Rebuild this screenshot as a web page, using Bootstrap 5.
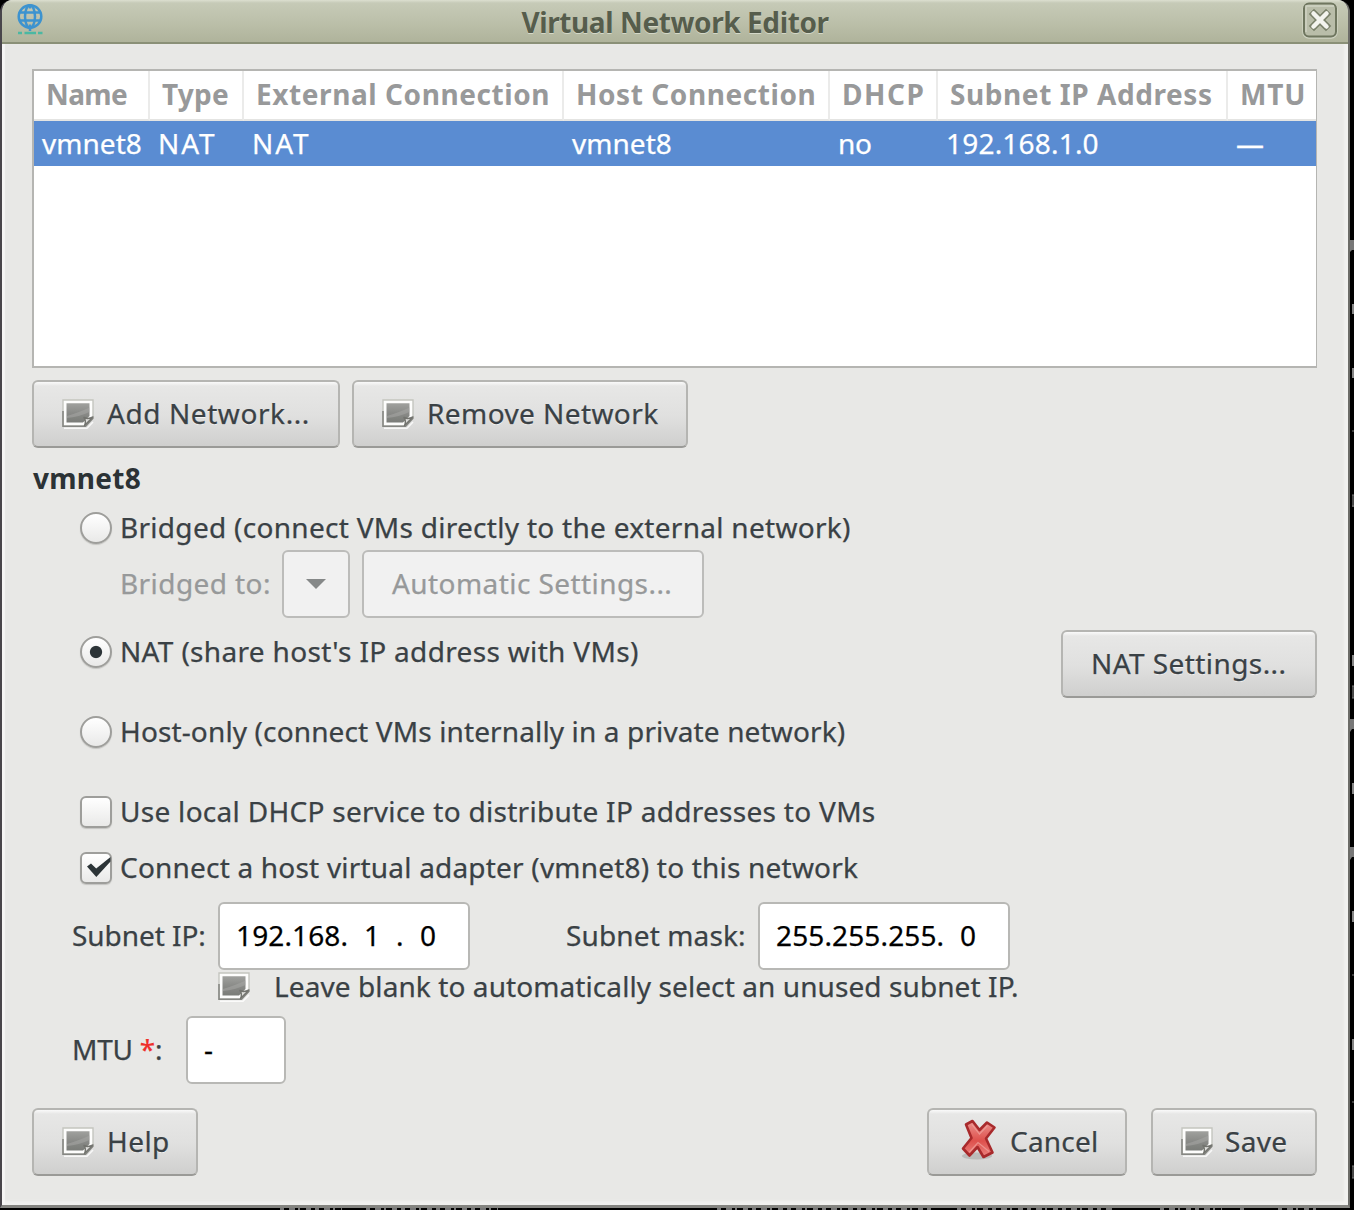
<!DOCTYPE html>
<html lang="en">
<head>
<meta charset="utf-8">
<title>Virtual Network Editor</title>
<link href="https://cdn.jsdelivr.net/npm/bootstrap@5.3.0/dist/css/bootstrap.min.css" rel="stylesheet">
<style>
body{width:1354px;height:1210px;overflow:hidden;background:#000;font-family:"Noto Sans","Open Sans",sans-serif;font-size:28px;line-height:34px;color:#3a4145}
.desk{width:1354px;height:1210px}
.win{width:1350px;height:1208px;background:#e8e8e6;border-style:solid;border-width:0 2px 3px 2px;border-color:#8b8b87 #6c6c68 #858581 #49464b;border-radius:12px 12px 0 0;overflow:hidden}
.titlebar{height:44px;background:linear-gradient(#dcdfd0 0,#c6cab7 3px,#bcc0aa 22px,#b0b49c 41px);border-bottom:2px solid #8a9077;color:#565d4c;font-weight:700;text-shadow:0 1px 0 #d4d8c8}
.titlebar .t{top:1px}
.titlebar .globe{left:14px;top:3px}
.titlebar .shut{right:10px;top:2px}
.main-area{height:1161px;padding:25px 31px 0 30px;box-shadow:inset 3px 0 1px #f6f5f4,inset -4px -4px 2px #f1f1ef}
.t{display:inline-block;white-space:nowrap;position:relative;top:-1px;-webkit-text-stroke:.25px currentColor}
th .t,.titlebar .t,.lead-in .t{-webkit-text-stroke:0}
.list{height:299px;border:2px solid #b5b5b2;border-right-width:1px;background:#fff;width:1285px}
.list table{table-layout:fixed;width:1282px;margin:0;border-collapse:separate;border-spacing:0}
.list th{height:50px;padding:0 0 0 12px;color:#98999a;font-weight:700;border-right:2px solid #ebebea;border-bottom:2px solid #e4e4e2;white-space:nowrap;vertical-align:middle}
.list th:last-child{border-right:0}
.list td{height:45px;padding:0 0 0 8px;background:#5a8cd2;color:#fff;white-space:nowrap;vertical-align:middle}
.btn-gtk{height:68px;padding:0 0 0 28px;display:flex;align-items:center;font-size:28px;line-height:34px;color:#3a4145;border:2px solid #b5b5b2;border-bottom-color:#9a9a97;border-radius:6px;background:linear-gradient(#fafafa 0,#e7e7e6 4px,#e0e0df 34px,#cfcfce 64px);text-shadow:0 1px 0 #f4f4f4}
.btn-gtk .ico{margin-right:13px}
.btn-gtk.off{background:#f1f1f1;color:#97999a;border-color:#bcbcba}
.opt{margin:0;padding:0;height:40px;display:flex;align-items:center;min-height:0}
.form-check.opt .form-check-input{float:none;width:32px;height:32px;margin:0 8px 0 0;border:2px solid #9e9e9b;background:linear-gradient(#fff,#e9e9e8);box-shadow:0 1px 1px #c4c4c1}
.form-check.opt .form-check-input[type=checkbox]{border-radius:6px}
.form-check.opt .form-check-input[type=radio]:checked{background:radial-gradient(circle at 50% 50%,#2c3437 0 5.6px,transparent 6.6px),linear-gradient(#fff,#e9e9e8)}
.tick{left:0;top:4px}
.field{height:68px;border:2px solid #b8b8b5;border-radius:6px;background:#fff;color:#000;padding:0 0 0 16px;display:flex;align-items:center;font-size:28px;line-height:34px}
.w1{width:308px}.w2{width:336px}.w3{width:342px}.w4{width:256px}.w5{width:166px}.w6{width:200px}.w7{width:166px}
.indent{padding-left:48px}
.g0{letter-spacing:.05px}.g1{letter-spacing:.13px}.g2{letter-spacing:.2px}.g3{letter-spacing:.29px}.g35{letter-spacing:.33px}.g4{letter-spacing:.43px}.g5{letter-spacing:.42px}.g6{letter-spacing:.58px}.g17{letter-spacing:.9px}.g19{letter-spacing:1.9px}.g20{letter-spacing:1.5px}.n3{letter-spacing:-.23px}.n4{letter-spacing:-.4px}.n6{letter-spacing:-.6px}
.lead-in{color:#2b3235;font-weight:700;padding-left:1px}
.scraps{right:0;top:0}.scraps-low{left:0;bottom:0}
</style>
<script src="https://cdn.jsdelivr.net/npm/bootstrap@5.3.0/dist/js/bootstrap.bundle.min.js"></script>
</head>
<body>
<svg width="0" height="0" class="position-absolute">
<defs>
<linearGradient id="pg" x1="0" y1="0" x2="0" y2="1"><stop offset="0" stop-color="#a0a19e"/><stop offset=".5" stop-color="#8a8b88"/><stop offset="1" stop-color="#7a7c78"/></linearGradient>
<linearGradient id="xg" x1="0" y1="0" x2="0" y2="1"><stop offset="0" stop-color="#ec9590"/><stop offset=".55" stop-color="#de504c"/><stop offset="1" stop-color="#ec8480"/></linearGradient>
<symbol id="note" viewBox="0 0 32 30">
<path d="M2 29.2H25L31 23" fill="none" stroke="#fff" stroke-width="1.6" opacity=".8"/>
<path d="M1 1H31V19L23.500 27H1Z" fill="#fdfdfc" stroke="#c4c5bf" stroke-width="1.400"/>
<path d="M1 12V27.2H23.500L31.200 19" fill="none" stroke="#868783" stroke-width="1.600"/>
<path d="M4.500 4.200H27.500V17L21 23.500H4.500Z" fill="url(#pg)"/>
<path d="M5 17Q18 13 27.500 8.500V13Q17 18 5 19Z" fill="#a9aaa7" opacity=".5"/>
<path d="M22.500 26.500Q24.500 22.500 22 18.500Q26 20.500 31 18Z" fill="#dededb" stroke="#73746f" stroke-width="1.500" stroke-linejoin="round"/>
</symbol>
</defs>
</svg>
<div class="desk position-relative">
<svg class="scraps position-absolute" width="4" height="1210" viewBox="0 0 4 1210"><path d="M0 240H4V250H2L0 252ZM0 719H4V729H2L0 732ZM0 847H4V857H2L0 860Z" fill="#777"/><path d="M3 304v10M3 368v10M3 655v11M3 783v11M3 911v11M3 1039v11" stroke="#858585" stroke-width="2"/><path d="M2 431h2M2 495h2M2 506h2M3 495v12M2 686h2M2 698h2M3 686v12M2 975h2M2 1102h2M2 1166h2M2 1178h2M3 1166v12" stroke="#777" stroke-width="1.2"/></svg>
<svg class="scraps-low position-absolute" width="1354" height="3" viewBox="0 0 1354 3"><path d="M280 2H342M366 2H498M717 2H935M957 2H1112M1160 2H1222M1240 2H1246M1278 2H1316" stroke="#777" stroke-width="3" stroke-dasharray="4 5 6 3 2 6 5 4"/></svg>
<div class="win position-relative">
<div class="titlebar d-flex align-items-center justify-content-center position-relative">
<svg class="globe position-absolute" width="28" height="32" viewBox="0 0 28 32" fill="none" stroke="#3d93cf" stroke-width="2.500"><circle cx="14" cy="13.500" r="11.300"/><ellipse cx="14" cy="13.500" rx="5" ry="11.300"/><path d="M3.500 9.500H24.500M3.500 17.500H24.500M14 2V5.500M14 21.500V28"/><path d="M2 30H6M8.500 30H20M22 30H26.500" stroke="#4bb8a2"/></svg>
<span class="t n4">Virtual Network Editor</span>
<svg class="shut position-absolute" width="36" height="37" viewBox="0 0 36 37"><rect x="1" y="1" width="34" height="35" rx="6" fill="none" stroke="#d0d4c3" stroke-width="1.5"/><rect x="2" y="1.500" width="32" height="33" rx="5" fill="#b9bda9" stroke="#6f765f" stroke-width="2"/><path d="M4 30V4H32" fill="none" stroke="#d0d3c3" stroke-width="1.5"/><path d="M12 12L24 24M24 12L12 24" stroke="#7b826b" stroke-width="7.500" stroke-linecap="square"/><path d="M11.500 11.500L24.500 24.500M24.500 11.500L11.500 24.500" stroke="#f3f4ee" stroke-width="4.500" stroke-linecap="round"/></svg>
</div>
<div class="main-area d-flex flex-column">
<div class="list">
<table>
<colgroup><col style="width:116px"><col style="width:94px"><col style="width:320px"><col style="width:266px"><col style="width:108px"><col style="width:290px"><col style="width:88px"></colgroup>
<thead><tr><th><span class="t n6">Name</span></th><th><span class="t g2">Type</span></th><th><span class="t g6">External Connection</span></th><th><span class="t g6">Host Connection</span></th><th><span class="t g20">DHCP</span></th><th><span class="t g6">Subnet IP Address</span></th><th><span class="t g17">MTU</span></th></tr></thead>
<tbody><tr><td><span class="t g0">vmnet8</span></td><td><span class="t g19">NAT</span></td><td><span class="t g19">NAT</span></td><td><span class="t g0">vmnet8</span></td><td><span class="t n3">no</span></td><td><span class="t g2">192.168.1.0</span></td><td><span class="t">—</span></td></tr></tbody>
</table>
</div>
<div class="d-flex" style="margin-top:12px;gap:12px">
<button class="btn btn-gtk w1"><svg class="ico" width="32" height="30"><use href="#note"/></svg><span class="t g6">Add Network...</span></button>
<button class="btn btn-gtk w2"><svg class="ico" width="32" height="30"><use href="#note"/></svg><span class="t g5">Remove Network</span></button>
</div>
<div class="lead-in" style="margin-top:14px;height:32px"><span class="t g3">vmnet8</span></div>
<div class="indent d-flex flex-column">
<div class="form-check opt" style="margin-top:14px"><input class="form-check-input" type="radio" name="mode" id="m1"><label for="m1" class="t g3">Bridged (connect VMs directly to the external network)</label></div>
<div class="d-flex align-items-center" style="padding-left:40px;margin-top:2px;color:#97999a">
<span class="t g5" style="width:162px">Bridged to:</span>
<button class="btn btn-gtk off" style="width:68px;padding-left:22px"><svg width="20" height="10" viewBox="0 0 20 10"><path d="M0 0H20L10 10Z" fill="#858888"/></svg></button>
<button class="btn btn-gtk off w3" style="margin-left:12px"><span class="t g4">Automatic Settings...</span></button>
</div>
<div class="d-flex justify-content-between align-items-start" style="margin-top:12px;height:82px">
<div class="form-check opt" style="margin-top:2px"><input class="form-check-input" type="radio" name="mode" id="m2" checked><label for="m2" class="t g35">NAT (share host's IP address with VMs)</label></div>
<button class="btn btn-gtk w4"><span class="t g5">NAT Settings...</span></button>
</div>
<div class="form-check opt"><input class="form-check-input" type="radio" name="mode" id="m3"><label for="m3" class="t g1">Host-only (connect VMs internally in a private network)</label></div>
<div class="form-check opt" style="margin-top:40px"><input class="form-check-input" type="checkbox" id="c1"><label for="c1" class="t g3">Use local DHCP service to distribute IP addresses to VMs</label></div>
<div class="form-check opt position-relative" style="margin-top:16px"><input class="form-check-input" type="checkbox" id="c2"><svg class="tick position-absolute" width="32" height="32" viewBox="0 0 32 32"><path d="M7 14.500L11 11.500L16.200 16.400L30.500 5V9.500L16.300 25Z" fill="#2c3437"/></svg><label for="c2" class="t g2">Connect a host virtual adapter (vmnet8) to this network</label></div>
</div>
<div class="d-flex align-items-center" style="margin-top:14px;padding-left:40px">
<span class="t n3" style="width:146px;letter-spacing:-.05px">Subnet IP:</span>
<div class="field" style="width:252px"><span class="t g1" style="width:128px">192.168.</span><span class="t" style="width:32px">1</span><span class="t" style="width:24px">.</span><span class="t">0</span></div>
<span class="t g1" style="width:192px;margin-left:96px">Subnet mask:</span>
<div class="field" style="width:252px"><span class="t g1" style="width:184px">255.255.255.</span><span class="t">0</span></div>
</div>
<div class="d-flex align-items-center" style="height:34px;padding-left:186px"><svg width="32" height="30" style="margin-right:24px"><use href="#note"/></svg><span class="t" style="letter-spacing:.09px">Leave blank to automatically select an unused subnet IP.</span></div>
<div class="d-flex align-items-center" style="margin-top:12px;padding-left:40px"><span class="t n3" style="width:114px">MTU <span style="color:#ef2f2a">*</span>:</span><div class="field" style="width:100px"><span class="t">-</span></div></div>
<div class="d-flex" style="margin-top:24px">
<button class="btn btn-gtk w5"><svg class="ico" width="32" height="30"><use href="#note"/></svg><span class="t g5">Help</span></button>
<button class="btn btn-gtk w6 ms-auto" style="margin-right:24px"><svg width="38" height="42" viewBox="0 0 38 42" style="margin:-4px 11px 0 4px"><ellipse cx="16" cy="37" rx="15" ry="3.500" fill="#a9a9a7" opacity=".6"/><path d="M11.500 2L18.500 11L26 3.500L33.500 8.500L25 19.500L31.500 33.500L22.500 38L16.500 28L8.500 36.500L2 29.500L10.500 19L5 5.500Z" fill="url(#xg)" stroke="#a82a2c" stroke-width="2.600" stroke-linejoin="round"/><path d="M11 5.500L18.500 15L26.500 6.500M28 32.500L17 23.500L8.500 33" fill="none" stroke="#f0a5a0" stroke-width="1.200" opacity=".7"/></svg><span class="t" style="letter-spacing:.2px">Cancel</span></button>
<button class="btn btn-gtk w7"><svg class="ico" width="32" height="30" style="margin-right:12px"><use href="#note"/></svg><span class="t g3">Save</span></button>
</div>
</div>
</div>
</div>
</body>
</html>
